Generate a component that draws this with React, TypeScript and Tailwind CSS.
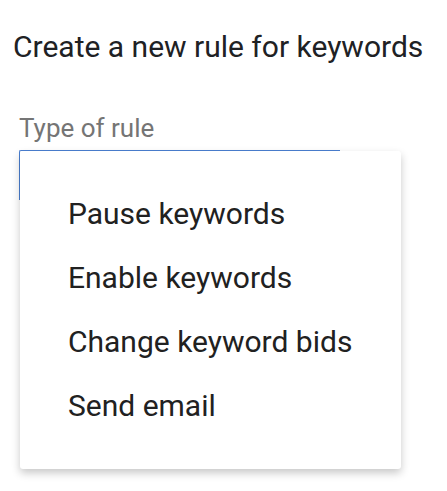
const items = ['Pause keywords', 'Enable keywords', 'Change keyword bids', 'Send email']

export default function App() {
  return (
    <div className="min-h-screen bg-white font-['Roboto',sans-serif]">
      <div className="px-[13px] pt-[29px]">
        <h1 className="text-[30px] leading-[36px] text-[#202124] font-normal whitespace-nowrap">
          Create a new rule for keywords
        </h1>
        <div className="mt-[47px] pl-[6px]">
          <div className="text-[26px] leading-[32px] text-[#757575]">Type of rule</div>
          <div className="relative mt-[6px]">
            <div className="w-[321px] h-[50px] border-l border-t border-[#4a7fd1] rounded-tl-[2px]" />
            <div className="absolute left-[1px] top-[1px] w-[381px] bg-white rounded-[3px] shadow-[0_4px_9px_rgba(0,0,0,0.22)] py-[31px]">
              {items.map((item) => (
                <div key={item} className="pl-[48px] h-[64px] leading-[64px] text-[30px] text-[#212121]">
                  {item}
                </div>
              ))}
            </div>
          </div>
        </div>
      </div>
    </div>
  )
}
